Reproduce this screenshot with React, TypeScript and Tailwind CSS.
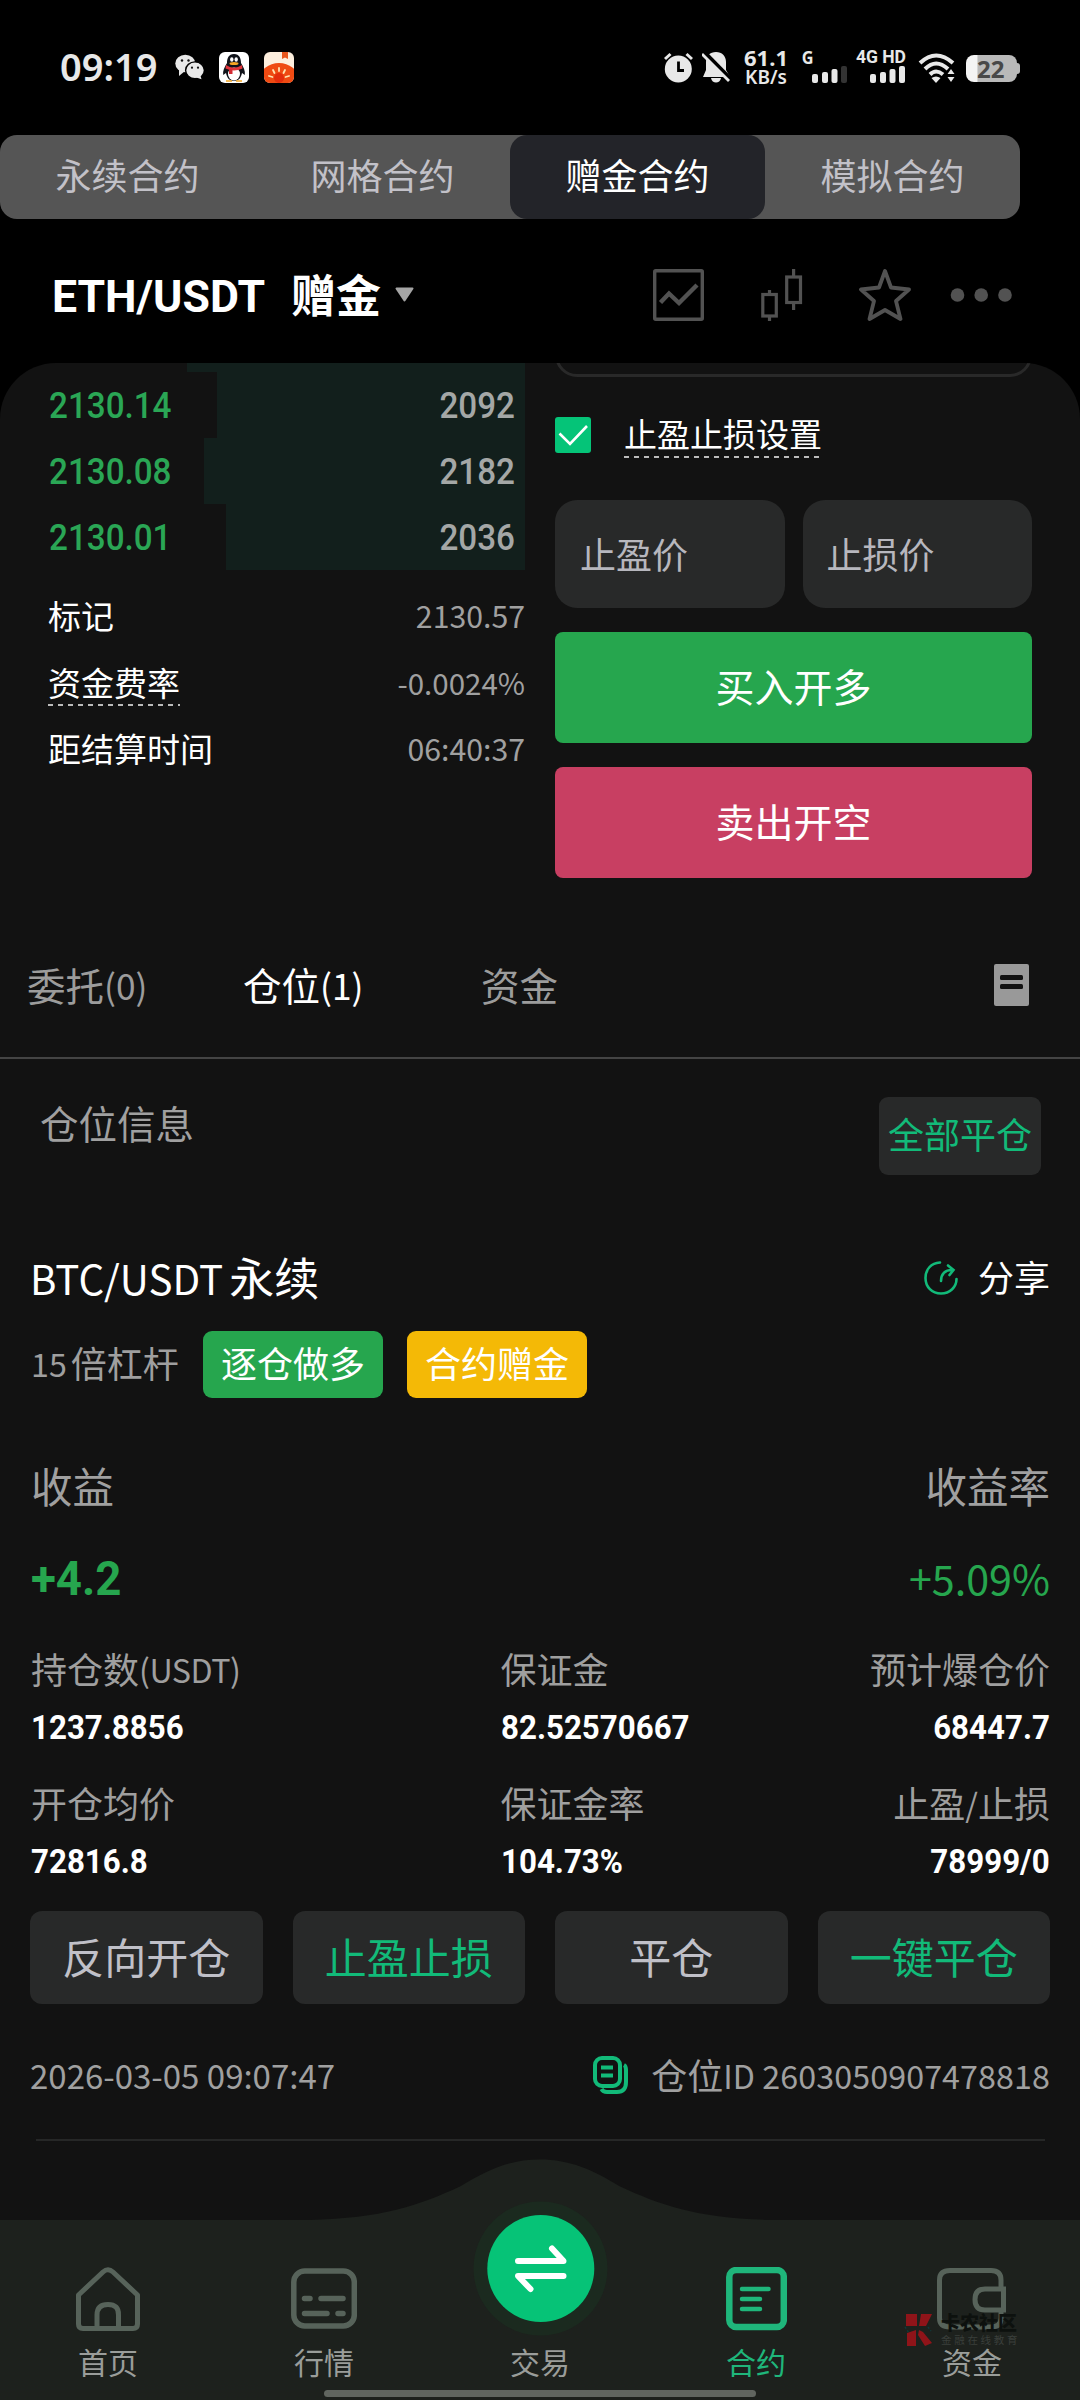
import type { ReactNode } from "react";

/* Latin and digits inside Chinese text */
function Lat({ children, wide }: { children: ReactNode; wide?: boolean }) {
  return (
    <span
      className={
        wide
          ? "relative -top-[1px] font-['Noto_Sans_CJK_SC',sans-serif] text-[0.917em] leading-[0]"
          : "relative -top-[1px] font-['Noto_Sans_CJK_SC',sans-serif] text-[0.895em] leading-[0]"
      }
    >
      {children}
    </span>
  );
}

/* Condensed figures used for prices */
function Num({ children, className = "" }: { children: ReactNode; className?: string }) {
  return (
    <span className={`inline-block whitespace-pre font-['Roboto',sans-serif] ${className}`}>
      {children}
    </span>
  );
}

function Signal({ weak }: { weak?: boolean }) {
  return (
    <svg width="36" height="18" viewBox="0 0 36 18" fill="#e8e8e8">
      <rect x="0" y="8" width="6" height="9" rx="2" />
      <rect x="10" y="6" width="6" height="11" rx="2" />
      <rect x="19.5" y="3" width="6" height="14" rx="2" />
      <rect x="29" y="0" width="6" height="17" rx="2" fill={weak ? "#333" : "#e8e8e8"} />
    </svg>
  );
}

function StatusBar() {
  return (
    <header className="flex h-[135px] shrink-0 items-start pl-[60px] pr-[60px] pt-[48px] text-[#e8e8e8]">
      <div className="-mt-[1px] w-[115px] whitespace-nowrap text-[38px] font-semibold leading-[38px]">09:19</div>
      <svg className="mt-[6px]" width="29" height="26" viewBox="0 0 29 26">
        <ellipse cx="10.3" cy="9.5" rx="10" ry="8.8" fill="#e8e8e8" />
        <path d="M4 15 L4 22 L10 17 Z" fill="#e8e8e8" />
        <ellipse cx="20" cy="16.3" rx="9.4" ry="8.4" fill="#e8e8e8" stroke="#000" strokeWidth="1.4" />
        <path d="M20 23 L26.5 25.2 L25 20 Z" fill="#e8e8e8" />
        <g fill="#111">
          <circle cx="7" cy="6.5" r="1.2" />
          <circle cx="13.5" cy="6.5" r="1.2" />
          <circle cx="17" cy="13.7" r="1.1" />
          <circle cx="23" cy="13.7" r="1.1" />
        </g>
      </svg>
      <svg className="ml-[15px] mt-[4px]" width="30" height="31" viewBox="0 0 30 31">
        <rect width="30" height="31" rx="6" fill="#fff" />
        <path d="M15 2 C9.5 2 8 6.5 8 11 C5.5 15 3.5 19 4.2 23 L7 21 C8 26 10.5 29 15 29 S22 26 23 21 L25.8 23 C26.5 19 24.5 15 22 11 C22 6.5 20.5 2 15 2 Z" fill="#10131a" />
        <ellipse cx="15" cy="22" rx="6" ry="6.5" fill="#fff" />
        <path d="M7 13 Q15 18.5 23 13 L23.5 16.5 Q15 20.5 6.5 16.5 Z" fill="#e2353b" />
        <path d="M10 17 L10 22 L13.5 22 L13.5 17.5 Z" fill="#d22b33" />
        <ellipse cx="12.8" cy="7.5" rx="1.7" ry="2.3" fill="#fff" />
        <ellipse cx="17.2" cy="7.5" rx="1.7" ry="2.3" fill="#fff" />
        <ellipse cx="15" cy="11.6" rx="4.5" ry="1.5" fill="#f5a623" />
        <path d="M7 29 L13 29 M17 29 L23 29" stroke="#f5a623" strokeWidth="1.5" />
      </svg>
      <svg className="ml-[15px] mt-[4px]" width="30" height="31" viewBox="0 0 30 31">
        <clipPath id="tomato"><rect width="30" height="31" rx="6" /></clipPath>
        <g clipPath="url(#tomato)">
          <rect width="30" height="31" fill="#fdeedd" />
          <path d="M18 0 H24 V7 L21 5.5 L18 7 Z" fill="#e8571e" />
          <ellipse cx="15" cy="26" rx="19" ry="15" fill="#ef4a12" />
          <path d="M15 16 V19 M9 18 L10.5 21 M21 18 L19.5 21 M5 24 L8.5 25 M25 24 L21.5 25" stroke="#ffe3b0" strokeWidth="1.8" strokeLinecap="round" />
          <circle cx="15" cy="26" r="5" fill="#e32d0c" />
        </g>
      </svg>

      <svg className="ml-auto mt-[4px]" width="29" height="31" viewBox="0 0 29 31">
        <circle cx="14.3" cy="17" r="13.5" fill="#e8e8e8" />
        <path d="M1 7 L6.5 2 M22.5 2 L28 7" stroke="#e8e8e8" strokeWidth="3" />
        <path d="M14.5 9.5 V18.5 H20" stroke="#000" strokeWidth="2.8" fill="none" />
      </svg>
      <svg className="ml-[9px] mt-[4px]" width="28" height="31" viewBox="0 0 28 31">
        <path d="M14 0 C20 0 24 4 24 10 V18 L28 25 H1 L4 18 V10 C4 4 8 0 14 0 Z" fill="#e8e8e8" />
        <path d="M9 26 H19 C18 32 10 32 9 26 Z" fill="#e8e8e8" />
        <path d="M2 0.5 L30 29" stroke="#000" strokeWidth="5" />
        <path d="M0 2 L27 29" stroke="#e8e8e8" strokeWidth="2.8" />
      </svg>
      <div className="ml-[14px] flex w-[44px] flex-col items-center whitespace-nowrap font-bold">
        <span className="text-[22px] leading-[19px]">61.1</span>
        <span className="mt-[1px] text-[19px] font-semibold leading-[19px]">KB/s</span>
      </div>
      <div className="ml-[13px] flex w-[47px] flex-col items-start font-bold">
        <span className="scale-x-[0.9] text-[18px] leading-[18px]">G</span>
        <div className="self-end"><Signal weak /></div>
      </div>
      <div className="ml-[9px] flex w-[49px] flex-col items-end whitespace-nowrap font-['Roboto',sans-serif] font-bold">
        <span className="text-[17.5px] leading-[18px]">4G HD</span>
        <Signal />
      </div>
      <svg className="ml-[12px] mt-[5px]" width="37" height="31" viewBox="0 0 37 31" fill="none" stroke="#e8e8e8" strokeWidth="4">
        <path d="M2 10 Q18 -5 35 10" />
        <path d="M7 16 Q18 5 30 16" />
        <path d="M12 21.5 Q18 15.5 25 21.5" />
        <path d="M13.5 25 Q18 22 22.5 25 L18 30 Z" fill="#e8e8e8" stroke="none" />
        <path d="M33 16 L36.5 21 H29.5 Z M33 29 L36.5 24 H29.5 Z" fill="#e8e8e8" stroke="none" />
      </svg>
      <div className="ml-[11px] mt-[7px] flex items-center">
        <div className="flex h-[27px] w-[51px] items-center rounded-[8px] bg-linear-to-r from-[#f4f4f4] from-22% to-[#b9b9b9] to-23% pl-[11px] text-[24px] font-bold leading-[27px] text-[#484848]">
          22
        </div>
        <div className="h-[11px] w-[3px] rounded-r-[3px] bg-[#b9b9b9]" />
      </div>
    </header>
  );
}

function ProductTabs() {
  const tabs = ["永续合约", "网格合约", "赠金合约", "模拟合约"];
  return (
    <nav className="flex h-[84px] w-[1020px] shrink-0 rounded-[17px] bg-[#555555] text-[36px] leading-[84px] text-[#c2c1c8]">
      {tabs.map((t, i) => (
        <div key={t} className={i === 2 ? "flex-1 rounded-[17px] bg-[#232429] text-center text-white" : "flex-1 text-center"}>
          {t}
        </div>
      ))}
    </nav>
  );
}

function PairHeader() {
  return (
    <div className="flex h-[144px] shrink-0 items-center pl-[52px] pr-[68px] pt-[7px]">
      <div className="mt-[5px] flex w-[239px] items-center leading-[60px]">
        <Num className="origin-left scale-x-[0.99] text-[45px] font-bold text-white">ETH/USDT</Num>
      </div>
      <div className="mt-[2px] text-[45px] font-bold leading-[60px] text-white">赠金</div>
      <svg className="ml-[14px] -mt-[1px]" width="19" height="15" viewBox="0 0 19 15">
        <path d="M1.5 1.5 H17.5 L9.5 13.5 Z" fill="#a5a5a5" stroke="#a5a5a5" strokeWidth="2" strokeLinejoin="round" />
      </svg>
      <div className="ml-auto flex items-center text-[#525252]">
        <svg width="51" height="52" viewBox="0 0 51 52" fill="none" stroke="currentColor">
          <rect x="1.7" y="1.7" width="47.6" height="48.6" rx="1" strokeWidth="3.4" />
          <path d="M7.5 33.5 L16 24.5 L26 34 L44 16" strokeWidth="4.4" />
        </svg>
        <svg className="ml-[57px]" width="42" height="52" viewBox="0 0 42 52" fill="none" stroke="currentColor" strokeWidth="3.2">
          <rect x="1.8" y="25.5" width="13.5" height="21.5" />
          <path d="M8.5 21 V25.5 M8.5 47 V52" />
          <rect x="25.7" y="8" width="13.8" height="25.5" />
          <path d="M32.6 0 V8 M32.6 33.5 V41" />
        </svg>
        <svg className="ml-[56px]" width="52" height="52" viewBox="0 0 52 52" fill="none" stroke="currentColor" strokeWidth="3.8" strokeLinejoin="round">
          <path d="M26 2 L32 18.5 L50 20.5 L37 32 L41.5 50 L26 41 L10.5 50 L15 32 L2 20.5 L20 18.5 Z" />
        </svg>
        <svg className="ml-[39px]" width="62" height="14" viewBox="0 0 62 14" fill="currentColor">
          <circle cx="7.5" cy="7" r="6.8" />
          <circle cx="31.2" cy="7" r="6.8" />
          <circle cx="55" cy="7" r="6.8" />
        </svg>
      </div>
    </div>
  );
}

const bids = [
  { price: "2130.14", qty: "2092", w: 308 },
  { price: "2130.08", qty: "2182", w: 321 },
  { price: "2130.01", qty: "2036", w: 299 },
];

function OrderBook() {
  return (
    <div className="w-[525px] pl-[48px]">
      <div className="ml-auto h-[9px] w-[338px] bg-[#121f1c]" />
      {bids.map((b) => (
        <div key={b.price} className="relative flex h-[66px] items-center justify-between pl-[1px] pr-[10px] text-[36.5px] font-medium leading-[69px]">
          <div className="absolute right-0 top-0 h-full bg-[#121f1c]" style={{ width: b.w }} />
          <Num className="relative origin-left scale-x-[0.91] text-[#2aa655]">{b.price}</Num>
          <Num className="relative origin-right scale-x-[0.91] text-[#a4a7a6]">{b.qty}</Num>
        </div>
      ))}
      <div className="mt-[14px] text-[33px] leading-[66.5px] text-white">
        <div className="flex h-[66.5px] justify-between"><span>标记</span><span className="text-[#a0a0a0]"><Lat wide>2130.57</Lat></span></div>
        <div className="flex h-[66.5px] justify-between">
          <span className="relative">
            资金费率
            <span className="absolute bottom-[11px] left-0 h-[2px] w-full bg-[repeating-linear-gradient(90deg,#bbb_0_5px,transparent_5px_10px)]" />
          </span>
          <span className="text-[#a0a0a0]"><Lat>-0.0024%</Lat></span>
        </div>
        <div className="flex h-[66.5px] justify-between"><span>距结算时间</span><span className="text-[#a0a0a0]"><Lat wide>06:40:37</Lat></span></div>
      </div>
    </div>
  );
}

function OrderForm() {
  return (
    <div className="ml-[30px] w-[477px]">
      <div className="h-[14px] overflow-hidden">
        <div className="-mt-[46px] h-[60px] rounded-[22px] border-[3px] border-[#292929]" />
      </div>
      <div className="mt-[40px] flex h-[36px] items-center">
        <svg width="36" height="36" viewBox="0 0 36 36">
          <rect width="36" height="36" rx="3" fill="#05c478" />
          <path d="M4.5 16.5 L15 27 L32 9" fill="none" stroke="#fff" strokeWidth="2.6" />
        </svg>
        <div className="relative ml-[33px] text-[33px] leading-[38px] text-white">
          止盈止损设置
          <span className="absolute -bottom-[4px] left-0 h-[2px] w-full bg-[repeating-linear-gradient(90deg,#bbb_0_5px,transparent_5px_10px)]" />
        </div>
      </div>
      <div className="mt-[47px] grid grid-cols-2 gap-[18px] text-[36px] leading-[112px] text-[#b7b7be]">
        <div className="h-[108px] rounded-[22px] bg-[#282929] pl-[25px]">止盈价</div>
        <div className="h-[108px] rounded-[22px] bg-[#282929] pl-[24px]">止损价</div>
      </div>
      <div className="mt-[24px] h-[111px] rounded-[8px] bg-[#26a64e] text-center text-[39px] leading-[109px] text-white">买入开多</div>
      <div className="mt-[24px] h-[111px] rounded-[8px] bg-[#c83f62] text-center text-[39px] leading-[109px] text-white">卖出开空</div>
    </div>
  );
}

function ListTabs() {
  return (
    <div className="mt-[108px] flex h-[73px] border-b-2 border-[#444] pl-[27px] pr-[51px] text-[38.5px] text-[#9c9c9c]">
      <div className="-mt-[29px] flex w-full items-start leading-[58px]">
        <span className="w-[216px]">委托<Lat wide>(0)</Lat></span>
        <span className="w-[238px] text-white">仓位<Lat wide>(1)</Lat></span>
        <span>资金</span>
        <svg className="ml-auto mt-[7px]" width="35" height="42" viewBox="0 0 35 42">
          <rect width="35" height="42" rx="2" fill="#999" />
          <rect x="6" y="11" width="23" height="5" rx="1.5" fill="#121212" />
          <rect x="6" y="20" width="23" height="5" rx="1.5" fill="#121212" />
        </svg>
      </div>
    </div>
  );
}

function Field({ label, value, right }: { label: ReactNode; value: string; right?: boolean }) {
  return (
    <div className={right ? "flex flex-col items-end" : "flex flex-col items-start"}>
      <div className="whitespace-nowrap text-[36px] leading-[56px] text-[#9f9f9f]">{label}</div>
      <Num
        className={
          right
            ? "origin-right scale-x-[0.92] text-[34px] font-bold leading-[56px] text-white"
            : "origin-left scale-x-[0.92] text-[34px] font-bold leading-[56px] text-white"
        }
      >
        {value}
      </Num>
    </div>
  );
}

function Position() {
  const actions = [
    { label: "反向开仓", green: false },
    { label: "止盈止损", green: true },
    { label: "平仓", green: false },
    { label: "一键平仓", green: true },
  ];
  return (
    <section className="pl-[31px] pr-[30px]">
      <div className="flex h-[162px] justify-between pl-[9px] pr-[9px] pt-[38px]">
        <div className="text-[38.5px] leading-[55px] text-[#a0a0a0]">仓位信息</div>
        <div className="h-[78px] w-[162px] rounded-[9px] bg-[#282929] text-center text-[36px] leading-[78px] text-[#12ba79]">全部平仓</div>
      </div>
      <div className="flex h-[110px] items-center justify-between pt-[5px]">
        <div className="flex items-center gap-[6px] text-[45px] leading-[70px] text-white"><span className="-ml-[1px]"><Lat>BTC/USDT</Lat></span><span>永续</span></div>
        <div className="flex items-center gap-[19px] text-[36px] leading-[60px] text-white">
          <svg className="-mt-[1px]" width="36" height="36" viewBox="0 0 36 36" fill="none" stroke="#12ba79" strokeWidth="2.6" strokeLinecap="round">
            <path d="M17 2.5 C8 3 2.5 9.5 2.5 18 C2.5 27 9 33.5 18 33.5 C27 33.5 33.5 27 33.500 19" />
            <path d="M18 21 C18 14 22 10 29 10 M25 5.5 L30.5 10 L26.5 15" />
          </svg>
          分享
        </div>
      </div>
      <div className="flex h-[67px] items-center text-[36px] leading-[67px]">
        <div className="flex w-[172px] gap-[4px] whitespace-nowrap text-[#9f9f9f]"><span><Lat>15</Lat></span><span>倍杠杆</span></div>
        <div className="h-[67px] w-[180px] rounded-[9px] bg-[#26a64e] text-center text-white">逐仓做多</div>
        <div className="ml-[24px] h-[67px] w-[180px] rounded-[9px] bg-[#f4b906] text-center text-white">合约赠金</div>
      </div>
      <div className="mt-[59px] flex justify-between text-[41.5px] leading-[60px] text-[#a0a0a0]"><span>收益</span><span>收益率</span></div>
      <div className="mt-[32px] flex h-[60px] justify-between text-[#26a64e]">
        <Num className="origin-left scale-x-[0.95] text-[48px] font-bold leading-[60px]">+4.2</Num>
        <span className="text-[45px] leading-[60px]"><Lat wide>+5.09%</Lat></span>
      </div>
      <div className="mt-[34px] grid grid-cols-[469.5px_1fr_auto] gap-y-[22px]">
        <Field label={<>持仓数<span className="tracking-[-0.5px]"><Lat>(USDT)</Lat></span></>} value="1237.8856" />
        <Field label="保证金" value="82.52570667" />
        <Field label="预计爆仓价" value="68447.7" right />
        <Field label="开仓均价" value="72816.8" />
        <Field label="保证金率" value="104.73%" />
        <Field label={<>止盈<Lat>/</Lat>止损</>} value="78999/0" right />
      </div>
      <div className="-ml-[1px] mt-[22px] grid grid-cols-4 gap-[30px] text-center text-[42px] leading-[93px]">
        {actions.map((a) => (
          <div key={a.label} className={a.green ? "h-[93px] rounded-[12px] bg-[#282929] text-[#12ba79]" : "h-[93px] rounded-[12px] bg-[#282929] text-[#c0c0c8]"}>
            {a.label}
          </div>
        ))}
      </div>
      <div className="mt-[43px] flex h-[60px] items-center text-[36px] leading-[60px] text-[#a0a0a0]">
        <span className="-ml-[1px]"><Lat wide>2026-03-05 09:07:47</Lat></span>
        <svg className="-mt-[4px] ml-auto" width="35" height="38" viewBox="0 0 35 38" fill="none" stroke="#12ba79">
          <rect x="2" y="2" width="25" height="28" rx="7" strokeWidth="4" />
          <path d="M8 11.5 H20 M8 19.5 H20" strokeWidth="4" strokeLinecap="butt" />
          <path d="M31 9 Q33 10 33 14 V26 Q33 36 24 36 H14 Q10 36 8.5 33" strokeWidth="4" />
        </svg>
        <span className="ml-[23px]">仓位<span className="tracking-[0.1px]"><Lat>ID 2603050907478818</Lat></span></span>
      </div>
      <div className="mx-[5px] mt-[32px] h-[2px] bg-[#262727]" />
    </section>
  );
}

function BottomNav() {
  const items = [
    {
      label: "首页",
      icon: (
        <svg width="64" height="64" viewBox="0 0 64 64" fill="none" stroke="#57635a" strokeWidth="5" strokeLinejoin="round">
          <path d="M2.5 28 L27 5 Q32 0.5 37 5 L61.5 28 V57 Q61.5 61.5 57 61.5 H7 Q2.5 61.5 2.5 57 Z" />
          <path d="M21 61 V48 Q21 37.5 32 37.5 T42.5 48 V61" />
        </svg>
      ),
    },
    {
      label: "行情",
      icon: (
        <svg width="66" height="64" viewBox="0 0 66 64" fill="none" stroke="#57635a" strokeWidth="5.5" strokeLinecap="round">
          <rect x="2.8" y="4" width="60.5" height="55" rx="11" />
          <path d="M13.5 31.5 H19 M30 31.5 H52 M13.5 46.5 H36 M47 46.5 H52" />
        </svg>
      ),
    },
    { label: "交易", icon: null },
    {
      label: "合约",
      icon: (
        <svg width="61" height="64" viewBox="0 0 61 64" fill="none" stroke="#1fb67b" strokeWidth="6.5">
          <rect x="3.3" y="3" width="54.5" height="57" rx="7" />
          <path d="M16 22 H42.5 M16 32 H34 M16 42 H34" strokeWidth="4.5" strokeLinecap="round" />
        </svg>
      ),
    },
    {
      label: "资金",
      icon: (
        <svg className="ml-[-1px]" width="69" height="64" viewBox="0 0 69 64" fill="none" stroke="#57635a" strokeWidth="5">
          <path d="M64 22 V13 Q64 3.5 54 3.5 H13 Q2.5 3.5 2.5 13 V51 Q2.5 60 13 60 H54 Q64 60 64 51 V43" />
          <path d="M66.5 22 H48 Q38 22 38 32.5 T48 43 H66.5 Z" />
        </svg>
      ),
    },
  ];
  return (
    <footer className="relative mt-auto h-[180px] w-[1080px] shrink-0">
      <svg className="absolute bottom-0 left-0" width="1080" height="242" viewBox="0 0 1080 242">
        <path d="M0 62 H310 C382 60 418 48 461 28 C487 12 510 1.5 540 1.5 C570 1.5 593 12 619 28 C662 48 698 60 770 62 H1080 V242 H0 Z" fill="#1d211d" />
        <circle cx="540.5" cy="110.5" r="67" fill="#1b2a1f" />
        <circle cx="540.8" cy="110.5" r="53.5" fill="#06c377" />
        <path d="M518 103 H563.5 L552 90.5 M563.5 118 H518 L530.5 131" fill="none" stroke="#fff" strokeWidth="6" strokeLinecap="round" strokeLinejoin="round" />
      </svg>
      <div className="relative grid grid-cols-5 pt-[47px] text-center">
        {items.map((it) => (
          <div key={it.label} className="flex flex-col items-center">
            <div className="h-[76px]">{it.icon}</div>
            <div className={it.label === "合约" ? "text-[30px] leading-[40px] text-[#1fb67b]" : "text-[30px] leading-[40px] text-[#9a9d9a]"}>{it.label}</div>
          </div>
        ))}
      </div>
      <div className="absolute bottom-[53px] left-[904px] flex items-center gap-[8px]">
        <svg width="29" height="34" viewBox="0 0 29 34" fill="#8f1419">
          <path d="M2 1 H13 V13 H2 Z M17 1 H28 L22 13 H15 Z" />
          <path d="M3 20 L12 17 V33 H3 Z M15 17 L19 19 L28 30 L21 33 L14 22 Z" />
          <path d="M1 14 L5 20 M24 14 L27 18" stroke="#0f3a3a" strokeWidth="1.5" strokeDasharray="2 2" />
        </svg>
        <div className="flex flex-col whitespace-nowrap">
          <span className="text-[19px] font-black leading-[20px] text-[#0d110e]">卡农社区</span>
          <span className="text-[10.5px] leading-[14px] tracking-[2.7px] text-[#3a3f3b]">金融在线教育</span>
        </div>
      </div>
      <div className="absolute bottom-[3px] left-[324px] h-[7px] w-[432px] rounded-full bg-[#60655f]" />
    </footer>
  );
}

export default function App() {
  return (
    <div className="flex h-[2400px] w-[1080px] flex-col overflow-hidden bg-black font-['Noto_Sans','Noto_Sans_CJK_SC',sans-serif]">
      <StatusBar />
      <ProductTabs />
      <PairHeader />
      <main className="flex flex-1 flex-col overflow-hidden rounded-t-[56px] bg-[#121212]">
        <div className="flex">
          <OrderBook />
          <OrderForm />
        </div>
        <ListTabs />
        <Position />
        <BottomNav />
      </main>
    </div>
  );
}
